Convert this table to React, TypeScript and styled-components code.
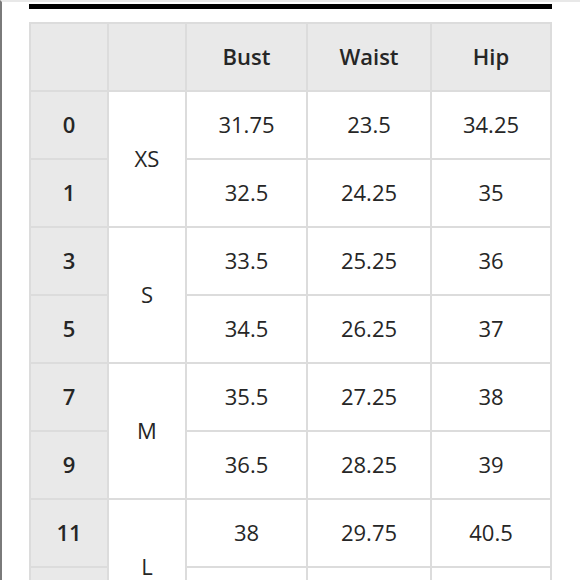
import styled, { createGlobalStyle } from "styled-components";

const GlobalStyle = createGlobalStyle`
  html, body {
    margin: 0;
    padding: 0;
    background: #ffffff;
    overflow: hidden;
  }
  body {
    font-family: "Open Sans", "Liberation Sans", sans-serif;
    color: #262626;
  }
`;

const Page = styled.div`
  height: 580px;
  border-top: 2px solid #e8e8e8;
  border-left: 2px solid #7a7a7a;
  box-sizing: border-box;
  padding: 2px 0 0 27px;
`;

const Rule = styled.div`
  width: 523px;
  height: 5px;
  background: #000;
`;

const Table = styled.table`
  margin-top: 13px;
  border-collapse: separate;
  border-spacing: 0;
  table-layout: fixed;
  width: 523px;
  border-top: 2px solid #dcdcdc;
  border-left: 2px solid #dcdcdc;
`;

const Cell = styled.td<{ $shade?: boolean; $bold?: boolean; $w?: number }>`
  box-sizing: border-box;
  width: ${(p) => (p.$w ? `${p.$w}px` : "auto")};
  height: 68px;
  padding: 0 0 2px;
  text-align: center;
  vertical-align: middle;
  font-size: 22px;
  font-weight: ${(p) => (p.$bold ? 600 : 400)};
  line-height: 1;
  background: ${(p) => (p.$shade ? "#e9e9e9" : "#ffffff")};
  border-right: 2px solid #dcdcdc;
  border-bottom: 2px solid #dcdcdc;
`;

const widths = [78, 78, 121, 124, 120];

type Row = { num: string; size?: string; bust: string; waist: string; hip: string };

const rows: Row[] = [
  { num: "0", size: "XS", bust: "31.75", waist: "23.5", hip: "34.25" },
  { num: "1", bust: "32.5", waist: "24.25", hip: "35" },
  { num: "3", size: "S", bust: "33.5", waist: "25.25", hip: "36" },
  { num: "5", bust: "34.5", waist: "26.25", hip: "37" },
  { num: "7", size: "M", bust: "35.5", waist: "27.25", hip: "38" },
  { num: "9", bust: "36.5", waist: "28.25", hip: "39" },
  { num: "11", size: "L", bust: "38", waist: "29.75", hip: "40.5" },
  // last row sits below the frame; its values are not visible
  { num: "", bust: "", waist: "", hip: "" },
];

export default function App() {
  return (
    <>
      <GlobalStyle />
      <Page>
        <Rule />
        <Table>
          <thead>
            <tr>
              <Cell as="th" $shade $w={widths[0]} />
              <Cell as="th" $shade $w={widths[1]} />
              <Cell as="th" $shade $bold $w={widths[2]}>Bust</Cell>
              <Cell as="th" $shade $bold $w={widths[3]}>Waist</Cell>
              <Cell as="th" $shade $bold $w={widths[4]}>Hip</Cell>
            </tr>
          </thead>
          <tbody>
            {rows.map((r, i) => (
              <tr key={i}>
                <Cell $shade $bold>{r.num}</Cell>
                {r.size && <Cell rowSpan={2}>{r.size}</Cell>}
                <Cell>{r.bust}</Cell>
                <Cell>{r.waist}</Cell>
                <Cell>{r.hip}</Cell>
              </tr>
            ))}
          </tbody>
        </Table>
      </Page>
    </>
  );
}
